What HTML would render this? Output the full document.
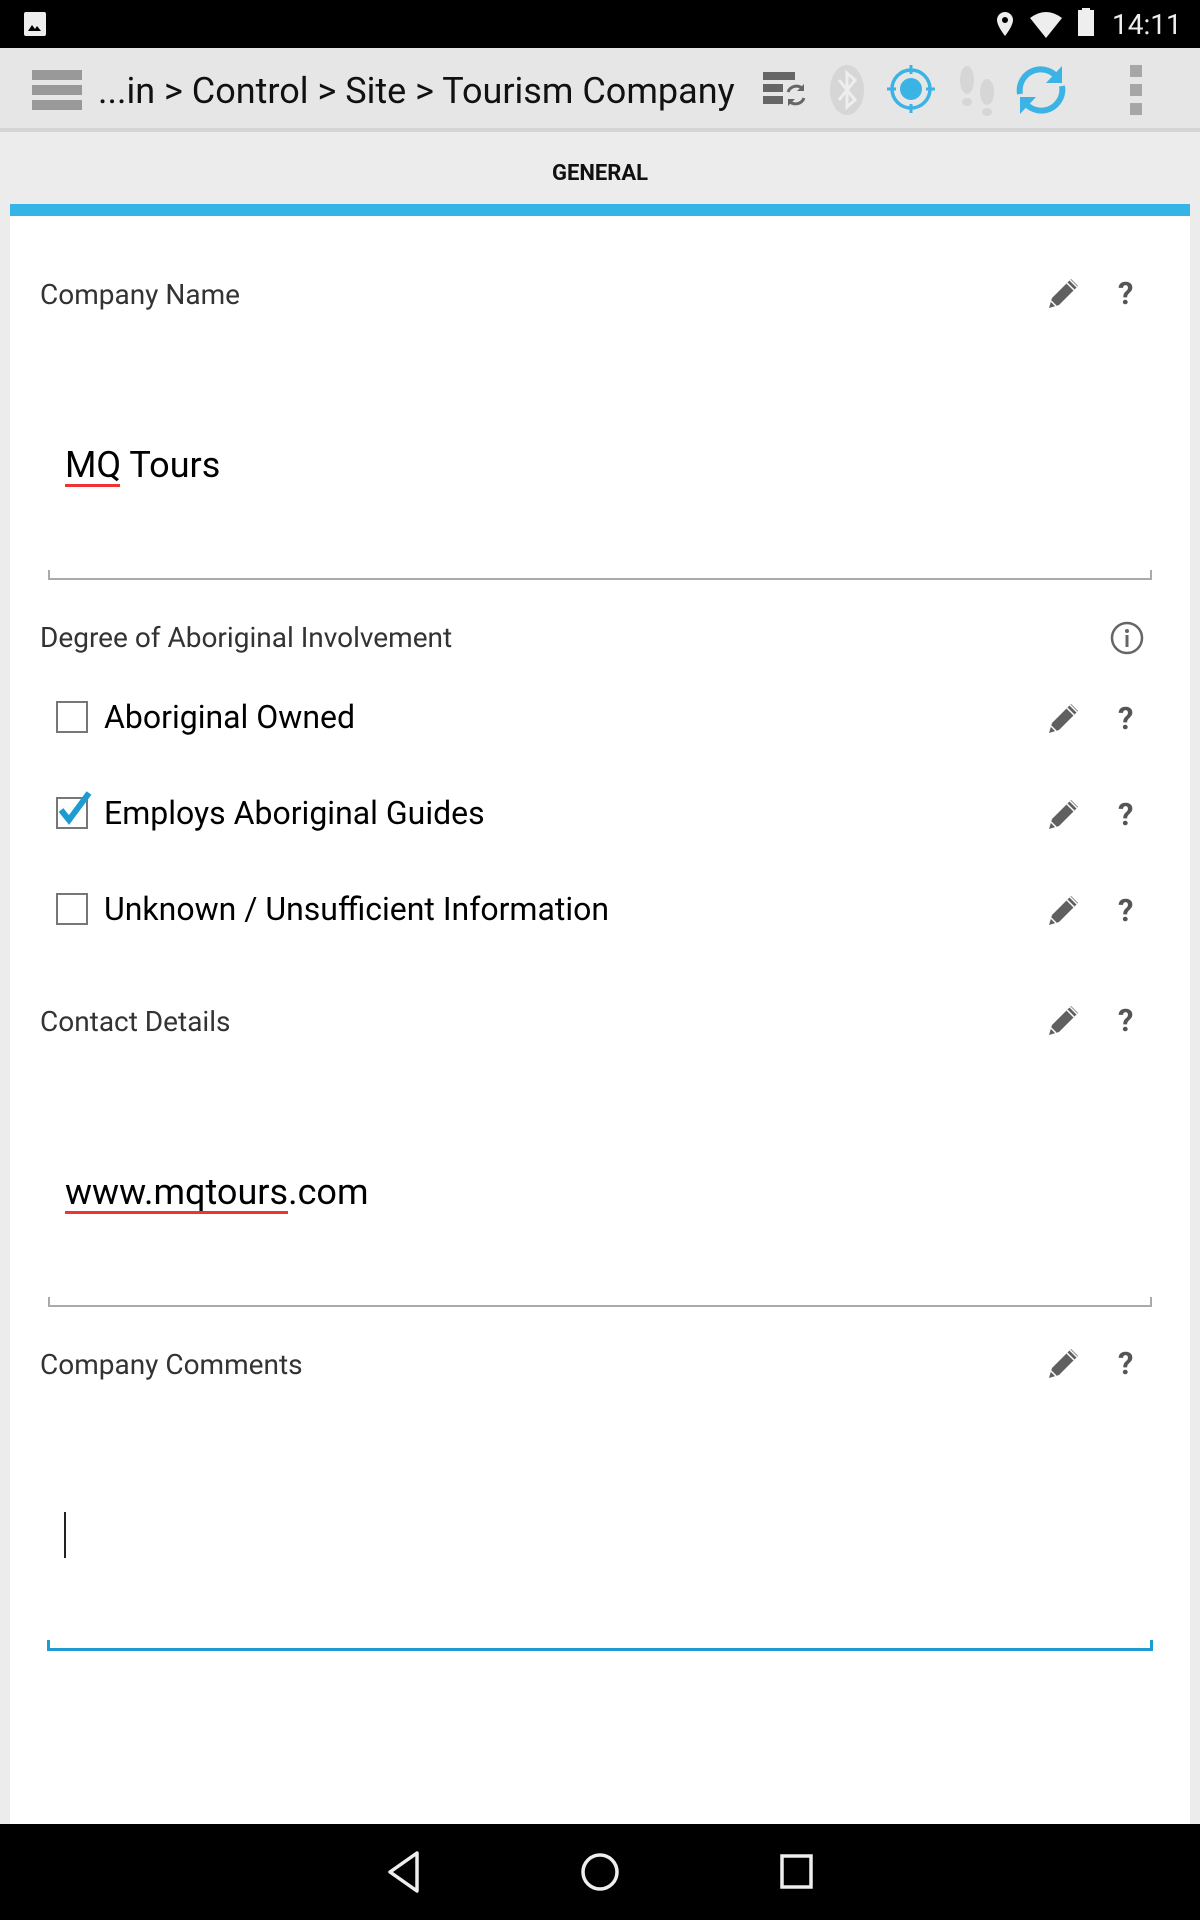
<!DOCTYPE html>
<html><head><meta charset="utf-8"><style>
*{margin:0;padding:0;box-sizing:border-box}
body{width:1200px;height:1920px;background:#ececec;position:relative;font-family:"Roboto","Liberation Sans",sans-serif;overflow:hidden;color:#000}
.abs{position:absolute}
.lbl{position:absolute;left:40px;font-size:28px;color:#333}
.big{position:absolute;left:65px;font-size:36px;color:#000}
.cb{position:absolute;left:56px;width:32px;height:32px;border:2px solid #777;background:#fff}
.cbt{position:absolute;left:104px;font-size:32px;color:#000}
.q{position:absolute;left:1118px;font-size:31px;font-weight:bold;color:#555}
.line{position:absolute;left:48px;width:1104px;height:10px;border:2px solid #aaa;border-top:none}
</style></head><body>
<!-- status bar -->
<div class="abs" style="left:0;top:0;width:1200px;height:48px;background:#000"></div>
<div class="abs" style="left:24px;top:12px;width:22px;height:24px;background:#eee;border-radius:2px"></div>
<svg class="abs" style="left:26px;top:22px" width="18" height="10"><path d="M2 9l4-6 3 4 2-3 4 5z" fill="#000"/></svg>
<svg class="abs" style="left:990px;top:10px" width="30" height="30" viewBox="0 0 30 30"><path d="M15 2a8 8 0 0 0-8 8c0 6 8 16 8 16s8-10 8-16a8 8 0 0 0-8-8z" fill="#eee"/><circle cx="15" cy="10" r="3" fill="#000"/></svg>
<svg class="abs" style="left:1028px;top:10px" width="36" height="30" viewBox="0 0 36 30"><path d="M2 8Q18-4 34 8L18 28z" fill="#eee"/></svg>
<div class="abs" style="left:1078px;top:10px;width:16px;height:26px;background:#eee"></div>
<div class="abs" style="left:1082px;top:8px;width:8px;height:4px;background:#eee"></div>
<div class="abs" style="left:1112px;top:8px;color:#eee;font-size:28px;">14:11</div>
<!-- toolbar -->
<div class="abs" style="left:0;top:48px;width:1200px;height:80px;background:#e6e6e6"></div>
<div class="abs" style="left:0;top:128px;width:1200px;height:4px;background:#d4d4d4"></div>
<div class="abs" style="left:32px;top:70px;width:50px;height:10px;background:#999"></div>
<div class="abs" style="left:32px;top:85px;width:50px;height:10px;background:#999"></div>
<div class="abs" style="left:32px;top:100px;width:50px;height:10px;background:#999"></div>
<div class="abs" style="left:98px;top:70px;font-size:36px;color:#111;white-space:nowrap">...in &gt; Control &gt; Site &gt; Tourism Company</div>
<svg class="abs" style="left:760px;top:70px" width="48" height="40" viewBox="0 0 48 40"><rect x="3" y="2" width="32" height="8" fill="#666"/><rect x="3" y="14" width="20" height="8" fill="#666"/><rect x="3" y="26" width="20" height="8" fill="#666"/><path d="M28 22a9 9 0 0 1 15-3M44 28a9 9 0 0 1-15 3" stroke="#666" stroke-width="3" fill="none"/><path d="M44 14v7h-7zM28 36v-7h7z" fill="#666"/></svg>
<svg class="abs" style="left:828px;top:64px" width="38" height="52" viewBox="0 0 38 52"><ellipse cx="19" cy="26" rx="17" ry="25" fill="#d6d6d6"/><path d="M11 16l16 20-8 7V9l8 7-16 20" stroke="#eee" stroke-width="3" fill="none"/></svg>
<svg class="abs" style="left:886px;top:64px" width="50" height="50" viewBox="0 0 50 50"><circle cx="25" cy="25" r="19" stroke="#3bb3e4" stroke-width="3.5" fill="none"/><circle cx="25" cy="25" r="11" fill="#3bb3e4"/><path d="M25 1v9M25 40v9M1 25h9M40 25h9" stroke="#3bb3e4" stroke-width="3"/></svg>
<svg class="abs" style="left:955px;top:64px" width="44" height="52" viewBox="0 0 44 52"><ellipse cx="12" cy="16" rx="7" ry="14" fill="#d6d6d6"/><ellipse cx="12" cy="38" rx="5" ry="4" fill="#d6d6d6"/><ellipse cx="32" cy="28" rx="7" ry="13" fill="#d6d6d6"/><ellipse cx="32" cy="48" rx="5" ry="4" fill="#d6d6d6"/></svg>
<svg class="abs" style="left:1014px;top:64px" width="54" height="52" viewBox="0 0 54 52"><path d="M6 30A21 21 0 0 1 42 12M48 22A21 21 0 0 1 12 40" stroke="#3bb3e4" stroke-width="6" fill="none"/><path d="M48 2v17H32zM6 50V33h16z" fill="#3bb3e4"/></svg>
<div class="abs" style="left:1130px;top:65px;width:12px;height:12px;background:#a6a6a6"></div>
<div class="abs" style="left:1130px;top:84px;width:12px;height:12px;background:#a6a6a6"></div>
<div class="abs" style="left:1130px;top:103px;width:12px;height:12px;background:#a6a6a6"></div>
<!-- tab -->
<div class="abs" style="left:0;top:161px;width:1200px;text-align:center;font-size:22px;font-weight:bold;color:#111">GENERAL</div>
<div class="abs" style="left:10px;top:204px;width:1180px;height:12px;background:#35b5e5"></div>
<div class="abs" style="left:10px;top:216px;width:1180px;height:1608px;background:#fff"></div>

<svg width="0" height="0" style="position:absolute"><defs><g id="pen"><path d="M2 32l3-10 19-19 7 7-19 19z" fill="#606060"/><path d="M20 7l7 7M23 4l7 7M4 25l5 5" stroke="#fff" stroke-width="1.5"/></g></defs></svg>

<div class="lbl" style="top:278px">Company Name</div>
<svg class="abs" style="left:1047px;top:276px" width="34" height="34"><use href="#pen"/></svg>
<div class="q" style="top:275px">?</div>
<div class="big" style="top:444px">MQ Tours</div>
<div class="abs" style="left:65px;top:484px;width:55px;height:3px;background:#e33"></div>
<div class="line" style="top:570px"></div>

<div class="lbl" style="top:621px">Degree of Aboriginal Involvement</div>
<svg class="abs" style="left:1110px;top:621px" width="34" height="34"><circle cx="17" cy="17" r="15" stroke="#666" stroke-width="2.5" fill="none"/><rect x="15.5" y="14" width="3" height="12" fill="#666"/><circle cx="17" cy="10" r="2" fill="#666"/></svg>

<div class="cb" style="top:701px"></div>
<div class="cbt" style="top:698px">Aboriginal Owned</div>
<svg class="abs" style="left:1047px;top:701px" width="34" height="34"><use href="#pen"/></svg>
<div class="q" style="top:700px">?</div>

<div class="cb" style="top:797px"></div>
<svg class="abs" style="left:56px;top:790px" width="40" height="40"><path d="M5 20l8 10L33 3" stroke="#1e9bd3" stroke-width="6" fill="none"/></svg>
<div class="cbt" style="top:794px">Employs Aboriginal Guides</div>
<svg class="abs" style="left:1047px;top:797px" width="34" height="34"><use href="#pen"/></svg>
<div class="q" style="top:796px">?</div>

<div class="cb" style="top:893px"></div>
<div class="cbt" style="top:890px">Unknown / Unsufficient Information</div>
<svg class="abs" style="left:1047px;top:893px" width="34" height="34"><use href="#pen"/></svg>
<div class="q" style="top:892px">?</div>

<div class="lbl" style="top:1005px">Contact Details</div>
<svg class="abs" style="left:1047px;top:1003px" width="34" height="34"><use href="#pen"/></svg>
<div class="q" style="top:1002px">?</div>
<div class="big" style="top:1171px">www.mqtours.com</div>
<div class="abs" style="left:65px;top:1211px;width:223px;height:3px;background:#e33"></div>
<div class="line" style="top:1297px"></div>

<div class="lbl" style="top:1348px">Company Comments</div>
<svg class="abs" style="left:1047px;top:1346px" width="34" height="34"><use href="#pen"/></svg>
<div class="q" style="top:1345px">?</div>
<div class="abs" style="left:64px;top:1512px;width:2px;height:46px;background:#222"></div>
<div class="abs" style="left:47px;top:1640px;width:1106px;height:11px;border:3px solid #1e9bd3;border-top:none"></div>

<!-- nav bar -->
<div class="abs" style="left:0;top:1824px;width:1200px;height:96px;background:#000"></div>
<svg class="abs" style="left:380px;top:1846px" width="440" height="52" viewBox="0 0 440 52"><path d="M37 7L10 26l27 19z" stroke="#eee" stroke-width="3.5" fill="none" stroke-linejoin="round"/><circle cx="220" cy="26" r="17" stroke="#eee" stroke-width="3.5" fill="none"/><rect x="402" y="10" width="29" height="31" stroke="#eee" stroke-width="3.5" fill="none"/></svg>
</body></html>
